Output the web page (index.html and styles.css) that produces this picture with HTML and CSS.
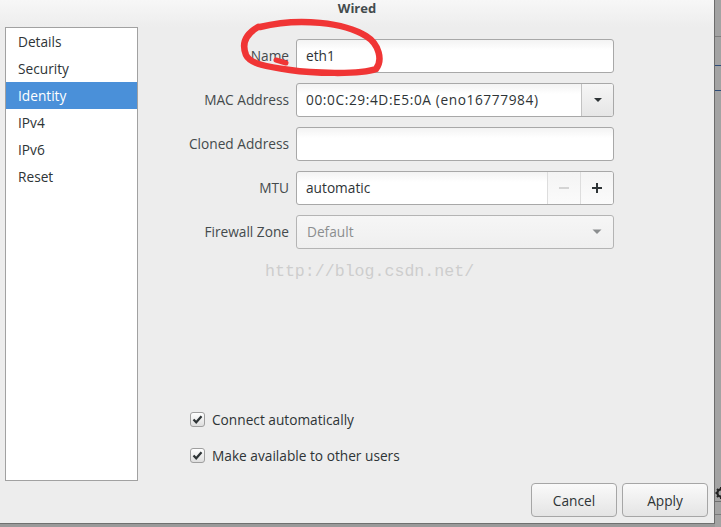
FILE: index.html
```html
<!DOCTYPE html>
<html>
<head>
<meta charset="utf-8">
<link rel="stylesheet" href="styles.css">
</head>
<body>
<div class="screen">
  <div class="dialog">
    <header class="titlebar">Wired</header>
    <div class="main">
      <nav class="sidebar">
        <div class="item">Details</div>
        <div class="item">Security</div>
        <div class="item selected">Identity</div>
        <div class="item">IPv4</div>
        <div class="item">IPv6</div>
        <div class="item">Reset</div>
      </nav>
      <section class="content">
        <div class="form">
          <div class="lbl">Name</div>
          <div class="entry"><span class="val">eth1</span></div>

          <div class="lbl">MAC Address</div>
          <div class="entry combo">
            <span class="val mac">00:0C:29:4D:E5:0A (eno16777984)</span>
            <span class="btn drop"><svg width="10" height="6" viewBox="0 0 10 6"><path d="M1 1 L9 1 L5 5 Z" fill="#2e3436"/></svg></span>
          </div>

          <div class="lbl">Cloned Address</div>
          <div class="entry"></div>

          <div class="lbl">MTU</div>
          <div class="entry spin">
            <span class="val">automatic</span>
            <span class="btn minus"><svg width="12" height="12" viewBox="0 0 12 12"><path d="M1 6 H11" stroke="#c9c9c9" stroke-width="1.5"/></svg></span>
            <span class="btn plus"><svg width="12" height="12" viewBox="0 0 12 12"><path d="M1 6 H11 M6 1 V11" stroke="#2e3436" stroke-width="2"/></svg></span>
          </div>

          <div class="lbl">Firewall Zone</div>
          <div class="entry disabled">
            <span class="val">Default</span>
            <span class="arrow"><svg width="10" height="6" viewBox="0 0 10 6"><path d="M0.5 0.5 L9.5 0.5 L5 5 Z" fill="#8b8e8f"/></svg></span>
          </div>
        </div>

        <div class="checks">
          <div class="check"><span class="box"><svg width="13" height="13" viewBox="0 0 13 13"><path d="M2.5 6.5 L5.2 9.3 L10.5 3.2" fill="none" stroke="#2e3436" stroke-width="2.2"/></svg></span>Connect automatically</div>
          <div class="check"><span class="box"><svg width="13" height="13" viewBox="0 0 13 13"><path d="M2.5 6.5 L5.2 9.3 L10.5 3.2" fill="none" stroke="#2e3436" stroke-width="2.2"/></svg></span>Make available to other users</div>
        </div>
      </section>
    </div>
    <footer class="actions">
      <button class="button">Cancel</button>
      <button class="button">Apply</button>
    </footer>

    <div class="watermark">http://blog.csdn.net/</div>
    <svg class="scribble" width="160" height="75" viewBox="0 0 160 75">
      <path d="M30 17 C70 7, 115 13, 136 26 C149 34, 153 50, 146 59 C130 65, 80 63, 60 60 C38 57, 20 54, 16 45 C12 35, 14 25, 28 17" fill="none" stroke="#f03535" stroke-width="6.5" stroke-linecap="round"/>
      <path d="M46 50 L56 53" stroke="#f03535" stroke-width="5" stroke-linecap="round"/>
    </svg>
  </div>
  <div class="desk">
    <svg class="gear" width="12" height="14" viewBox="0 0 12 14">
      <circle cx="6" cy="7" r="3.6" fill="none" stroke="#222" stroke-width="2.2"/>
      <path d="M6 1 V3 M6 11 V13 M0.5 7 H2.5 M9.5 7 H11.5 M2 3 L3.4 4.4 M8.6 9.6 L10 11 M2 11 L3.4 9.6 M8.6 4.4 L10 3" stroke="#222" stroke-width="2"/>
    </svg>
  </div>
</div>
</body>
</html>
```
FILE: styles.css
```css
* { box-sizing: border-box; }

html, body {
  margin: 0;
  padding: 0;
  width: 721px;
  height: 527px;
  overflow: hidden;
  background: #9a9a9a;
}

.screen {
  display: flex;
  width: 721px;
  height: 527px;
  font-family: "Open Sans", "Noto Sans", sans-serif;
  font-size: 13.7px;
  color: #2e3436;
}

.dialog {
  position: relative;
  width: 715px;
  height: 524px;
  background: #ededed;
  border-right: 1px solid #6c6c6c;
  border-bottom: 1px solid #707070;
  display: flex;
  flex-direction: column;
}

.titlebar {
  height: 27px;
  flex: none;
  text-align: center;
  font-weight: bold;
  font-size: 13px;
  line-height: 16px;
  color: #434b4d;
  background: linear-gradient(#f7f7f7, #ededed);
}

.main {
  display: flex;
  height: 454px;
  flex: none;
}

.sidebar {
  margin-left: 5px;
  width: 133px;
  height: 454px;
  background: #fff;
  border: 1px solid #a1a1a1;
  display: flex;
  flex-direction: column;
}

.item {
  height: 27px;
  line-height: 28px;
  padding-left: 12px;
  color: #2e3436;
}

.item.selected {
  background: #4a90d9;
  color: #fff;
}

.content {
  flex: 1;
  display: flex;
  flex-direction: column;
  padding-top: 12px;
}

.form {
  display: grid;
  grid-template-columns: 145px 318px;
  grid-auto-rows: 34px;
  column-gap: 7px;
  row-gap: 10px;
  padding-left: 6px;
}

.lbl {
  text-align: right;
  line-height: 34px;
  color: #444a4c;
}

.entry {
  display: flex;
  align-items: stretch;
  border: 1px solid #a8a8a8;
  border-radius: 3px;
  background: linear-gradient(#f3f3f3, #ffffff 10px);
  overflow: hidden;
}

.val {
  flex: 1;
  padding-left: 9px;
  line-height: 32px;
  white-space: nowrap;
  color: #2e3436;
}

.val.mac {
  letter-spacing: 0.6px;
}

.btn {
  flex: none;
  display: flex;
  align-items: center;
  justify-content: center;
}

.drop {
  width: 32px;
  border-left: 1px solid #c2c2c2;
  background: linear-gradient(#f6f6f6, #e6e6e6);
}

.minus, .plus {
  width: 33px;
  border-left: 1px solid #dddddd;
  background: linear-gradient(#f4f4f4, #fbfbfb);
}

.entry.disabled {
  background: linear-gradient(#f6f6f6, #efefef);
  border-color: #b4b4b4;
}

.entry.disabled .val {
  color: #8b8e8f;
  padding-left: 10px;
}

.arrow {
  width: 32px;
  display: flex;
  align-items: center;
  justify-content: center;
}

.checks {
  margin-top: auto;
  padding-left: 52px;
  padding-bottom: 15px;
  display: flex;
  flex-direction: column;
  gap: 14px;
}

.check {
  height: 22px;
  display: flex;
  align-items: center;
  gap: 7px;
  color: #2e3436;
}

.box {
  width: 15px;
  height: 15px;
  border: 1px solid #9f9f9f;
  border-radius: 3px;
  background: linear-gradient(#ffffff, #dedede);
  display: flex;
  align-items: center;
  justify-content: center;
}

.actions {
  flex: 1;
  display: flex;
  justify-content: flex-end;
  align-items: flex-start;
  gap: 5px;
  padding-top: 2px;
  padding-right: 6px;
}

.button {
  width: 86px;
  height: 34px;
  font-family: inherit;
  font-size: 13.7px;
  color: #2e3436;
  border: 1px solid #a6a6a6;
  border-radius: 4px;
  background: linear-gradient(#fafafa, #e4e4e4);
  padding: 0;
}

.watermark {
  position: absolute;
  left: 265px;
  top: 262px;
  font-family: "Liberation Mono", monospace;
  font-size: 16.6px;
  color: #cdcdcd;
  white-space: nowrap;
}

.scribble {
  position: absolute;
  left: 230px;
  top: 10px;
}

.desk {
  position: relative;
  flex: 1;
  height: 527px;
  background:
    linear-gradient(to bottom,
      #a3a3a3 0, #a3a3a3 36px, #7e7e7e 36px, #7e7e7e 37px,
      #a3a3a3 37px, #a3a3a3 65px, #2e4c78 65px, #2e4c78 66px,
      #a3a3a3 66px, #a3a3a3 90px, #2e4c78 90px, #2e4c78 91px,
      #a3a3a3 91px, #a3a3a3 501px, #6f6f6f 501px, #6f6f6f 502px,
      #a3a3a3 502px, #a3a3a3 514px, #7a7a7a 514px, #7a7a7a 515px,
      #a3a3a3 515px);
}

.gear {
  position: absolute;
  left: 0;
  top: 486px;
}
```
